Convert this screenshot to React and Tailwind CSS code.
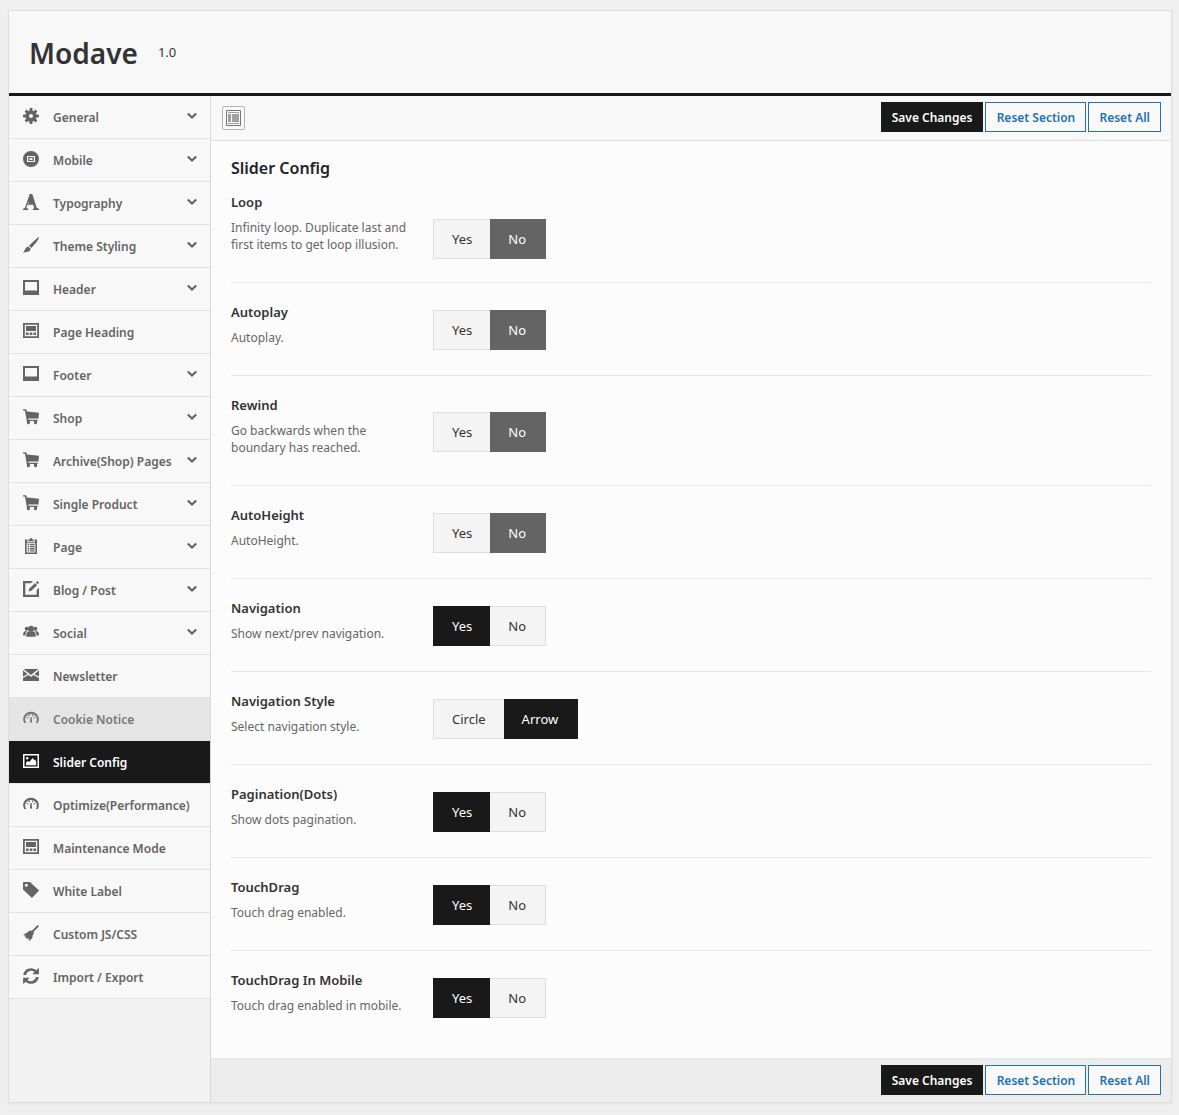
import { useState } from 'react';

const icons = {
  cog: (
    <>
      <path fillRule="evenodd" d="M8 2.500a5.500 5.500 0 1 0 0 11a5.500 5.500 0 0 0 0-11zM8 6a2 2 0 1 1 0 4a2 2 0 0 1 0-4z" />
      <path d="M6.700 0h2.600l.4 3.500H6.300zM6.700 16h2.600l.4-3.500H6.300zM0 6.700v2.600l3.500.4V6.300zM16 6.700v2.600l-3.500.4V6.300z" />
      <path d="M1.600 3.500l1.900-1.900L6 3.700 3.700 6zM14.400 3.500l-1.900-1.900L10 3.700 12.300 6zM1.600 12.500l1.900 1.900L6 12.300 3.700 10zM14.400 12.500l-1.900 1.900L10 12.300l2.300-2.300z" />
    </>
  ),
  record: <path fillRule="evenodd" d="M8 0a8 8 0 1 0 0 16A8 8 0 0 0 8 0zM4 5h8v6H4zM5.200 6v4h5.600V6zM6.500 7h3v2h-3z" />,
  font: <path fillRule="evenodd" d="M6.700 0h2.600l4.300 13.500c.3.800.8 1.100 2.400 1.300V16H9.800v-1.200c1.200-.1 1.500-.5 1.300-1.300l-.9-2.700H4.400l-.8 2.500c-.2 1 .3 1.400 1.600 1.500V16H0v-1.200c1.400-.2 1.900-.6 2.200-1.500zM4.800 9.500h1.100L5.400 7.700z" />,
  brush: (
    <>
      <path d="M16 0c-.2 1.600-1 3-2.400 5L8.400 11 6 8.800 11.500 3.600C13 2 14.500.6 16 0z" />
      <path d="M5.300 9.500l2.400 2.200c-.3 1.600-1.300 2.600-2.800 3-1.800.5-3.500.2-4.900 1.300.9-1 1.400-2 2-3.400.6-1.600 1.600-2.700 3.300-3.100z" />
    </>
  ),
  website: <path fillRule="evenodd" d="M0 0h16v15H0zM2 2v8.500h12V2z" />,
  heading: (
    <>
      <path fillRule="evenodd" d="M0 0h16v15H0zM1.800 1.800v11.400h12.400V1.800z" />
      <path d="M3 3h10v5H3zM3 9.500h2.600v2.500H3zM6.700 9.500h2.600v2.500H6.700zM10.400 9.500H13v2.500h-2.600z" />
    </>
  ),
  cart: (
    <>
      <path d="M0 .2h3l1 2.200 12 1.400-.5 5.700H5.300l.2 1.200h9.200v1.300H3.800L2.200 2.800 1.700 1.500H0z" />
      <path d="M3.900 11.500h3V14a1.500 1.300 0 0 1-3 0zM11 11.500h3V14a1.500 1.300 0 0 1-3 0z" />
    </>
  ),
  page: (
    <>
      <path fillRule="evenodd" d="M2 1.500h2.300v2.700h7.400V1.500H14V16H2zM3.600 5v9.500h8.800V5z" />
      <path d="M5.200 3.300V1.600h1.500a1.300 1.600 0 0 1 2.600 0h1.500v1.700zM4.600 5.800h1.400v1.400H4.600zM6.800 5.800h4.800v1.400H6.800zM4.600 8h1.400v1.300H4.600zM6.800 8h4.800v1.300H6.800zM4.600 10.100h1.400v1.300H4.600zM6.800 10.100h4.800v1.300H6.800zM4.600 12.200h1.400v1.300H4.600zM6.800 12.200h4.800v1.300H6.800z" />
    </>
  ),
  edit: (
    <>
      <path d="M0 0h10L7.800 2.200H2.300v11.500h11.400V9L16 6.800V16H0z" />
      <path d="M5.500 10.600l.7-2.900 5.900-5.600 2 2.100-5.800 5.500zM12.900 1.400L14.400 0 16 1.600l-1.200 1.700z" />
    </>
  ),
  group: (
    <>
      <circle cx="8" cy="4.700" r="2.900" />
      <circle cx="3.700" cy="4.800" r="2" />
      <circle cx="12.300" cy="4.800" r="2" />
      <path d="M3.400 12.700C2.900 9.400 3.900 7.500 6 7.300h4c2.100.2 3.100 2.100 2.600 5.400z" />
      <path d="M0 11.400C0 9 .8 7.200 2.800 7h1.100C2.800 8.200 2.500 9.600 2.600 11.400zM16 11.400c0-2.400-.8-4.200-2.800-4.400h-1.100c1.100 1.200 1.400 2.600 1.300 4.400z" />
    </>
  ),
  envelope: <path d="M.6 2h14.800L8 8zM0 3.300l4.600 3.900L0 9.600zM16 3.300l-4.600 3.900L16 9.600zM0 11l5.700-3L8 9.900 10.300 8l5.700 3v3H0z" />,
  dashboard: (
    <>
      <path d="M1.200 13C0 10.500-.2 8.300.8 6.200a8 8 0 0 1 14.400 0c1 2.100.8 4.300-.4 6.800h-2c1.300-2.300 1.400-4 .6-5.700a6 6 0 0 0-10.800 0c-.8 1.700-.7 3.400.6 5.700z" />
      <path d="M7.400 7h1.200l.5 5.600H6.900z" />
      <circle cx="4.600" cy="7.800" r=".8" />
      <circle cx="6.200" cy="5.400" r=".8" />
      <circle cx="9.800" cy="5.400" r=".8" />
      <circle cx="11.400" cy="7.800" r=".8" />
    </>
  ),
  picture: (
    <>
      <path fillRule="evenodd" d="M0 1h16v14H0zM1.500 2.500v11h13v-11z" />
      <path d="M3 12.300V9.600l2-1.500 1.400 1L9.600 5l1.600 2 .8-.6 1.200 2.400v3.500z" />
      <circle cx="4.200" cy="5.200" r="1.200" />
    </>
  ),
  tag: <path fillRule="evenodd" d="M0 1.200C0 .5.400 0 1.200 0H7l9 8.600-7 7.400L0 7.500zM3.300 1.800a1.500 1.500 0 1 0 0 3 1.500 1.500 0 0 0 0-3z" />,
  broom: <path d="M14.600 0L16 1.300l-5.400 5.500.2 1.900-1.200 1.900-.3 2.600-1.600 1L7.200 15.800 5.600 15l.2-2.200L4 14.200l-.6-1.800-1.600.4.800-2L0 10l4.200-2.500 2.200-1.700 2.800-.3z" />,
  refresh: (
    <path d="M.3 7C.7 3 4 .2 7.900.2c2 0 3.900.8 5.300 2.100L15.900 0v6.300H9.400l2.200-2.200A5.200 5.200 0 0 0 3 7zM15.700 9c-.4 4-3.700 6.800-7.600 6.800-2 0-3.900-.8-5.300-2.100L.1 16V9.700h6.500l-2.200 2.200A5.200 5.200 0 0 0 13 9z" />
  ),
};

const menu = [
  ['General', 'cog', true],
  ['Mobile', 'record', true],
  ['Typography', 'font', true],
  ['Theme Styling', 'brush', true],
  ['Header', 'website', true],
  ['Page Heading', 'heading', false],
  ['Footer', 'website', true],
  ['Shop', 'cart', true],
  ['Archive(Shop) Pages', 'cart', true],
  ['Single Product', 'cart', true],
  ['Page', 'page', true],
  ['Blog / Post', 'edit', true],
  ['Social', 'group', true],
  ['Newsletter', 'envelope', false],
  ['Cookie Notice', 'dashboard', false],
  ['Slider Config', 'picture', false],
  ['Optimize(Performance)', 'dashboard', false],
  ['Maintenance Mode', 'heading', false],
  ['White Label', 'tag', false],
  ['Custom JS/CSS', 'broom', false],
  ['Import / Export', 'refresh', false],
];

const fields = [
  ['Loop', 'Infinity loop. Duplicate last and first items to get loop illusion.', ['Yes', 'No'], 'No'],
  ['Autoplay', 'Autoplay.', ['Yes', 'No'], 'No'],
  ['Rewind', 'Go backwards when the boundary has reached.', ['Yes', 'No'], 'No'],
  ['AutoHeight', 'AutoHeight.', ['Yes', 'No'], 'No'],
  ['Navigation', 'Show next/prev navigation.', ['Yes', 'No'], 'Yes'],
  ['Navigation Style', 'Select navigation style.', ['Circle', 'Arrow'], 'Arrow'],
  ['Pagination(Dots)', 'Show dots pagination.', ['Yes', 'No'], 'Yes'],
  ['TouchDrag', 'Touch drag enabled.', ['Yes', 'No'], 'Yes'],
  ['TouchDrag In Mobile', 'Touch drag enabled in mobile.', ['Yes', 'No'], 'Yes'],
];

function MenuItem({ label, icon, expandable }) {
  let tone = 'border-[#e3e3e3] bg-[#f8f8f8] text-[#646464]';
  if (label === 'Cookie Notice') tone = 'border-[#e5e5e5] bg-[#e5e5e5] text-[#777777]';
  if (label === 'Slider Config') tone = 'border-[#e5e5e5] bg-[#191919] text-white';
  return (
    <li>
      <a href="#" className={`flex h-[43px] items-center border-b pt-0.5 pr-[13px] pl-3.5 text-[12px] font-semibold ${tone}`}>
        <svg viewBox="0 0 16 16" className="mb-1 size-4 shrink-0 fill-current">{icons[icon]}</svg>
        <span className="ml-3.5 flex-1 whitespace-nowrap">{label}</span>
        {expandable && (
          <svg viewBox="0 0 10 8" className="mb-1 h-2 w-2.5 shrink-0 fill-none stroke-current stroke-[2.2]">
            <path d="M.8 1.500L5 5.500l4.200-4" />
          </svg>
        )}
      </a>
    </li>
  );
}

function Actions() {
  const outline = 'h-[30px] border border-[#2271b1] bg-[#f9f9f9] px-2.5 pt-0.5 text-[#2271b1]';
  return (
    <div className="ml-auto flex gap-0.5 text-[12px] font-semibold">
      <button type="button" className="h-[30px] bg-[#191919] px-[11px] pt-0.5 text-white">Save Changes</button>
      <button type="button" className={`min-w-[101px] ${outline}`}>Reset Section</button>
      <button type="button" className={outline}>Reset All</button>
    </div>
  );
}

function ButtonSet({ name, options, initial, first }) {
  const [value, setValue] = useState(initial);
  return (
    <div className={`flex h-10 text-[13px] ${first ? 'mt-6' : 'mt-1'}`} role="radiogroup" aria-label={name}>
      {options.map((option, i) => {
        let tone = 'border-[#dedede] bg-[#f4f4f4] text-[#333333]';
        if (value === option) {
          tone = option === 'No' ? 'border-[#646464] bg-[#646464] text-white' : 'border-[#191919] bg-[#191919] text-white';
        }
        const edge = i === 0 ? 'border-l px-[18px]' : 'border-r pr-[19px] pl-[18px]';
        return (
          <label key={option} className={`relative flex cursor-pointer items-center border-y pt-0.5 ${edge} ${tone}`}>
            <input
              type="radio"
              name={name}
              value={option}
              checked={value === option}
              onChange={() => setValue(option)}
              className="sr-only"
            />
            {option}
          </label>
        );
      })}
    </div>
  );
}

function Field({ title, text, options, initial, first, last }) {
  return (
    <div className={`flex items-center ${first ? 'pt-3' : 'pt-[19px]'} ${last ? 'pb-9' : 'border-b border-[#e7e7e7] pb-[21px]'}`}>
      <div className="w-[202px] shrink-0 pr-5">
        <h3 className="text-[13px] leading-5 font-semibold text-[#333333]">{title}</h3>
        <p className="mt-[7px] mb-2 text-[12px] leading-[17px] text-[#666666]">{text}</p>
      </div>
      <ButtonSet name={title} options={options} initial={initial} first={first} />
    </div>
  );
}

export default function App() {
  return (
    <div className="min-h-screen bg-[#efefef] pt-2.5 pr-[7px] pb-3 pl-2 font-['Noto_Sans',sans-serif] text-[#333333]">
      <form className="border border-[#dedede] bg-[#f2f2f2] shadow-xs" onSubmit={(e) => e.preventDefault()}>
        <header className="flex h-[85px] items-center border-b-3 border-[#191919] bg-[#f8f8f8] pt-0.5 pl-5">
          <h1 className="text-[28px] font-semibold">Modave</h1>
          <span className="ml-5 text-[13px]">1.0</span>
        </header>
        <div className="flex">
          <nav className="w-[201px] shrink-0" aria-label="Sections">
            <ul>
              {menu.map(([label, icon, expandable]) => (
                <MenuItem key={label} label={label} icon={icon} expandable={expandable} />
              ))}
            </ul>
          </nav>
          <main className="flex flex-1 flex-col border-l border-[#d8d8d8] bg-[#fcfcfc]">
            <div className="flex h-[45px] items-center border-b border-[#dedede] bg-[#f8f8f8] pr-2.5 pb-0.5 pl-[11px]">
              <button type="button" aria-label="Expand options" className="mt-0.5 flex h-6 w-[23px] items-center justify-center rounded-[2px] border border-[#b4b4b4] bg-[#f9f9f9]">
                <svg viewBox="0 0 15 16" className="h-4 w-[15px]">
                  <path d="M.5.5h14v15H.5z" fill="#f8f8f8" stroke="#777777" />
                  <path d="M2 2h11v1H2zM2 4h3v8H2zM6 4h7v8H6zM2 13h11v1H2z" fill="#a0a0a0" />
                </svg>
              </button>
              <Actions />
            </div>
            <section className="flex-1 px-5 pt-[15px]">
              <h2 className="text-[16px] leading-6 font-semibold text-[#1d2327]">Slider Config</h2>
              {fields.map(([title, text, options, initial], i) => (
                <Field
                  key={title}
                  title={title}
                  text={text}
                  options={options}
                  initial={initial}
                  first={i === 0}
                  last={i === fields.length - 1}
                />
              ))}
            </section>
            <footer className="flex h-11 items-center border-t border-[#e3e3e3] bg-[#ededed] pr-2.5 pb-0.5">
              <Actions />
            </footer>
          </main>
        </div>
      </form>
    </div>
  );
}
